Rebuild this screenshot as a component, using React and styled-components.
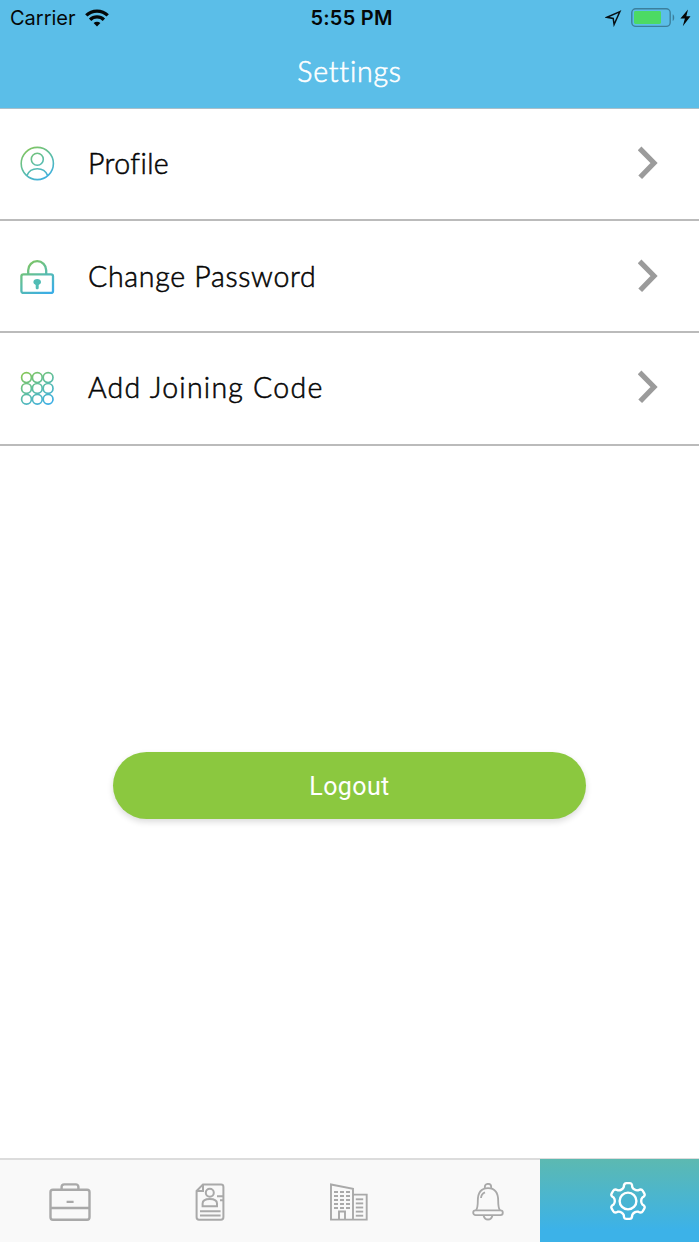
import React from 'react';
import styled, { createGlobalStyle } from 'styled-components';

const GlobalStyle = createGlobalStyle`
  *, *::before { box-sizing: border-box; }
  body { margin: 0; background: #fff; }
  svg { display: block; flex: none; }
`;

const Screen = styled.div`
  display: flex;
  flex-direction: column;
  width: 100%;
  height: 1242px;
  background: #fff;
  overflow: hidden;
  font-family: Lato, sans-serif;
`;

const Header = styled.header`
  height: 109px;
  background: #5bbee8;
  border-bottom: 1px solid #a9bfca;
`;

const StatusBar = styled.div`
  display: grid;
  grid-template-columns: 1fr auto 1fr;
  align-items: center;
  height: 36px;
  padding: 0 8px 0 10px;
  font: 400 20px/36px Inter, sans-serif;
  color: #050808;
`;

const StatusGroup = styled.div`
  display: flex;
  align-items: center;
  justify-content: ${(p) => (p.$end ? 'flex-end' : 'flex-start')};
  gap: ${(p) => p.$gap}px;
`;

const Clock = styled.span`
  padding-left: 2px;
  font-weight: 600;
  font-size: 20px;
  letter-spacing: 0.25px;
`;

const Title = styled.h1`
  margin: 0;
  height: 72px;
  font-size: 28.5px;
  font-weight: 300;
  -webkit-text-stroke: 0.6px currentColor;
  line-height: 71px;
  letter-spacing: 0.8px;
  text-align: center;
  color: #fff;
`;

const List = styled.main`
  flex: 1;
`;

const Row = styled.div`
  display: flex;
  align-items: center;
  height: ${(p) => p.$height}px;
  padding: 0 40px ${(p) => p.$bottom}px 20px;
  border-bottom: 2px solid #bbb;
`;

const RowIcon = styled.div`
  padding-top: ${(p) => p.$drop}px;
`;

const RowLabel = styled.span`
  flex: 1;
  margin-left: 33px;
  font-size: 28.5px;
  font-weight: 300;
  -webkit-text-stroke: 0.55px currentColor;
  line-height: 40px;
  letter-spacing: ${(p) => p.$spacing}px;
  color: #050505;
`;

const LogoutButton = styled.button`
  display: block;
  width: 473px;
  height: 67px;
  margin: 306px auto 0;
  padding: 1px 0 0;
  border: 0;
  border-radius: 34px;
  background: #8bc83f;
  box-shadow: 0 3px 6px rgba(0, 0, 0, 0.14);
  color: #fff;
  font: 400 25px/67px Roboto, sans-serif;
  letter-spacing: 0.4px;
`;

const TabBar = styled.nav`
  display: grid;
  grid-template-columns: repeat(5, 1fr);
  height: 84px;
  border-top: 2px solid #dcdcdc;
  background: #f9f9f9;
`;

const Tab = styled.div`
  display: flex;
  align-items: center;
  justify-content: center;
  padding-top: 1px;
  color: ${(p) => (p.$active ? '#fff' : '#a9a9a9')};
  ${(p) => p.$active && `
    margin: -1px 0 0 -19px;
    padding: 1px 0 0 17px;
    background: linear-gradient(#5cb9b1, #3cb2e8 85%);
  `}
`;

const Gradient = ({ id }) => (
  <defs>
    <linearGradient id={id} gradientUnits="userSpaceOnUse" x1="7" y1="1" x2="27" y2="34">
      <stop offset="0" stopColor="#83c65a" />
      <stop offset="0.5" stopColor="#5bbda6" />
      <stop offset="1" stopColor="#3caee5" />
    </linearGradient>
  </defs>
);

const ProfileIcon = () => (
  <svg width="35" height="35" fill="none" stroke="url(#profile)" strokeWidth="1.6">
    <Gradient id="profile" />
    <circle cx="17.3" cy="17.5" r="16.1" />
    <circle cx="17.3" cy="13.3" r="6" />
    <path d="M6.9 29.6C8.7 25.2 12.2 22.8 17.3 22.8s8.6 2.4 10.4 6.8" />
  </svg>
);

const LockIcon = () => (
  <svg width="35" height="36" fill="none" stroke="url(#lock)" strokeWidth="2.3">
    <Gradient id="lock" />
    <rect x="1.4" y="15.3" width="31.6" height="18.6" rx="2" />
    <path d="M8.2 15V11.2a9 9 0 0 1 18 0V15" />
    <path d="M17.2 20c-2.2 0-3.8 1.3-3.8 3.1 0 1.3.9 2.3 2.3 2.8v2.8c0 1 .6 1.6 1.5 1.6s1.5-.6 1.5-1.6v-2.8c1.4-.5 2.3-1.5 2.3-2.8 0-1.8-1.6-3.1-3.8-3.1z" fill="#51bcb5" stroke="none" />
  </svg>
);

const KeypadIcon = () => (
  <svg width="35" height="35" fill="none" stroke="url(#keypad)" strokeWidth="1.7">
    <Gradient id="keypad" />
    {[6.6, 17.4, 28.2].map((y) => [6.5, 17.3, 28.1].map((x) => (
      <circle key={`${x}-${y}`} cx={x} cy={y} r="4.9" />
    )))}
  </svg>
);

const Chevron = () => (
  <svg width="21" height="34" fill="none" stroke="#9b9b9b" strokeWidth="5.2">
    <path d="M1.6 2.4L16 17 2.2 31.2" />
  </svg>
);

const WifiIcon = () => (
  <svg width="24" height="18" fill="none" stroke="#050808" strokeWidth="3.3">
    <path d="M1.3 6.3C7 .6 17 .6 22.7 6.3" />
    <path d="M5.1 10.7c3.9-3.8 9.9-3.8 13.8 0" />
    <path d="M8.6 14.1c2-1.8 4.8-1.8 6.8 0L12 17.5z" fill="#050808" stroke="none" />
  </svg>
);

const LocationIcon = () => (
  <svg width="17" height="17" fill="none" stroke="#071014" strokeWidth="1.5">
    <path d="M14.9 1.6L2 7.3l6.2 1.2.9 6z" />
  </svg>
);

const BatteryIcon = () => (
  <svg width="44" height="20">
    <rect x="0.8" y="0.8" width="38.4" height="17.6" rx="4" fill="none" stroke="#3c7f9c" strokeWidth="1.4" />
    <rect x="3" y="3" width="27" height="13" rx="1.4" fill="#4cda64" />
    <path d="M41.7 6.3c2 .6 2 6.1 0 6.7z" fill="#3c7f9c" />
  </svg>
);

const BoltIcon = () => (
  <svg width="11" height="18" fill="#050808">
    <path d="M8 .5L.4 9.4h4.5L2.8 17.3l7.7-10H6.3z" />
  </svg>
);

const BriefcaseIcon = () => (
  <svg width="42" height="38" fill="none" stroke="currentColor" strokeWidth="2.4">
    <rect x="1.5" y="6.7" width="39" height="30" rx="2.4" />
    <path d="M12.6 6V4a2.6 2.6 0 0 1 2.6-2.6h11.6A2.6 2.6 0 0 1 29.4 4v2M2 25h38M17.6 18.9h7" />
  </svg>
);

const ResumeIcon = () => (
  <svg width="30" height="38" fill="none" stroke="currentColor" strokeWidth="2">
    <path d="M8 1.4h18a2.4 2.4 0 0 1 2.4 2.4v30.5a2.4 2.4 0 0 1-2.4 2.4H4a2.4 2.4 0 0 1-2.4-2.4V8zM8 1.5V8H1.8" />
    <circle cx="14.8" cy="9.8" r="4" />
    <path d="M7.6 23.3V20.5c0-3 3-4.5 7.2-4.5s7.2 1.5 7.2 4.5v2.8zM22 13.2h6M25 17.2h3.4M5 28.2h20.6M5 32.5h20.6" />
  </svg>
);

const BuildingIcon = () => (
  <svg width="40" height="38" fill="none" stroke="currentColor" strokeWidth="1.9">
    <path d="M2 36.6V1.5l22 4.2v30.9zM24 11.6h13.7v25H24" />
    <path d="M10 36V28.5h6V36" />
    {[9, 13, 17, 21, 25].map((y) => (
      <path key={y} d={`M5 ${y}h4M11 ${y}h4M17 ${y}h4`} />
    ))}
    {[16.3, 20.4, 24.5, 28.6, 32.7].map((y) => (
      <path key={y} d={`M26.8 ${y}h7.4`} />
    ))}
  </svg>
);

const BellIcon = () => (
  <svg width="34" height="38" viewBox="0 0 34 38" fill="none" stroke="currentColor" strokeWidth="1.8">
    <path d="M12.8 5.3V4a3.2 3.2 0 0 1 6.4 0v1.3" />
    <path d="M4 27.5c1.4-2 1.8-5 1.8-9.5C5.8 9.5 9 5.2 16 5.2S26.2 9.5 26.2 18c0 4.5.4 7.5 1.8 9.5" />
    <rect x="1.2" y="27.4" width="29.6" height="4.7" rx="2.35" />
    <path d="M11.5 32.2c.6 2.6 2.3 4.3 4.5 4.3s3.9-1.7 4.5-4.3M9 15c.2-2.9 1.5-4.7 4-5.7" />
  </svg>
);

const GearIcon = () => {
  const tooth = [[-4.2, -14.2], [-4.2, -17.2], [-3.2, -17.9], [-1.5, -17.9], [1.5, -17.9], [3.2, -17.9], [4.2, -17.2], [4.2, -14.2], [4.9, -12], [7.8, -10.2]];
  const turned = ([x, y], i) => {
    const a = (i * Math.PI) / 3;
    return `${(x * Math.cos(a) - y * Math.sin(a)).toFixed(2)} ${(x * Math.sin(a) + y * Math.cos(a)).toFixed(2)}`;
  };
  const d = [0, 1, 2, 3, 4, 5].map((i) => {
    const p = tooth.map((point) => turned(point, i));
    const next = turned(tooth[0], i + 1);
    return `${i ? '' : `M${p[0]}`}C${p[1]} ${p[2]} ${p[3]}L${p[4]}C${p[5]} ${p[6]} ${p[7]}C${p[8]} ${p[9]} ${next}`;
  }).join('');
  return (
    <svg width="40" height="40" viewBox="-20 -20 40 40" fill="none" stroke="currentColor" strokeWidth="2.4">
      <path d={`${d}Z`} />
      <circle r="8.4" />
    </svg>
  );
};

const items = [
  { label: 'Profile', Icon: ProfileIcon, height: 112, bottom: 2, drop: 0, spacing: 0.4 },
  { label: 'Change Password', Icon: LockIcon, height: 112, bottom: 0, drop: 2, spacing: 0.7 },
  { label: 'Add Joining Code', Icon: KeypadIcon, height: 113, bottom: 3, drop: 2, spacing: 1.25 },
];

const tabs = [BriefcaseIcon, ResumeIcon, BuildingIcon, BellIcon, GearIcon];

export default function App() {
  return (
    <Screen>
      <GlobalStyle />
      <Header>
        <StatusBar>
          <StatusGroup $gap={9}>Carrier<WifiIcon /></StatusGroup>
          <Clock>5:55 PM</Clock>
          <StatusGroup $end $gap={5}>
            <StatusGroup $gap={9}><LocationIcon /><BatteryIcon /></StatusGroup>
            <BoltIcon />
          </StatusGroup>
        </StatusBar>
        <Title>Settings</Title>
      </Header>
      <List>
        {items.map(({ label, Icon, height, bottom, drop, spacing }) => (
          <Row key={label} $height={height} $bottom={bottom}>
            <RowIcon $drop={drop}><Icon /></RowIcon>
            <RowLabel $spacing={spacing}>{label}</RowLabel>
            <Chevron />
          </Row>
        ))}
        <LogoutButton>Logout</LogoutButton>
      </List>
      <TabBar>
        {tabs.map((Icon, i) => (
          <Tab key={i} $active={i === 4}><Icon /></Tab>
        ))}
      </TabBar>
    </Screen>
  );
}
